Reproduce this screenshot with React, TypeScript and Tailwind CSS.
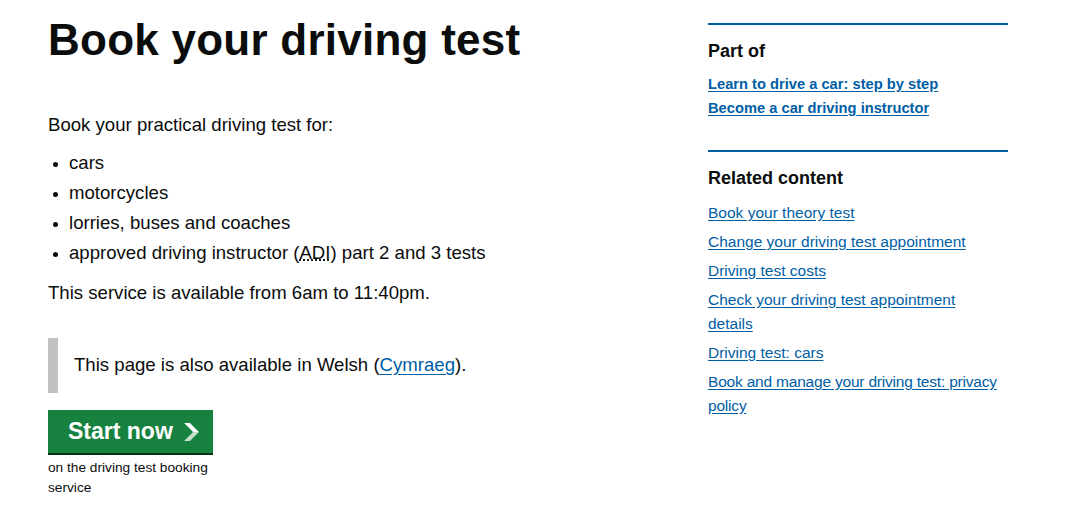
import React from "react";

const items = ["cars", "motorcycles", "lorries, buses and coaches"];

const related = [
  "Book your theory test",
  "Change your driving test appointment",
  "Driving test costs",
  "Check your driving test appointment details",
  "Driving test: cars",
];

function Bullet({ children }: { children: React.ReactNode }) {
  return (
    <li className="flex items-center">
      <span className="mt-[3px] ml-[5px] mr-[11px] h-[5px] w-[5px] shrink-0 rounded-full bg-[#0b0c0c]" />
      <span>{children}</span>
    </li>
  );
}

export default function App() {
  return (
    <div className="min-h-[516px] bg-white font-['Liberation_Sans',Arial,sans-serif] text-[#0b0c0c]">
      <div className="flex gap-[30px] pl-[48px]">
        {/* main column */}
        <div className="w-[630px] pt-[18px]">
          <h1 className="text-[44px] leading-[44px] font-bold tracking-[0.25px]">
            Book your driving test
          </h1>

          <p className="mt-[48px] text-[18.6px] leading-[30px]">
            Book your practical driving test for:
          </p>
          <ul className="mt-[8px] text-[18.6px] leading-[30px]">
            {items.map((i) => (
              <Bullet key={i}>{i}</Bullet>
            ))}
            <Bullet>
              approved driving instructor (
              <abbr title="approved driving instructor">ADI</abbr>) part 2 and
              3 tests
            </Bullet>
          </ul>
          <p className="mt-[10px] text-[18.6px] leading-[30px]">
            This service is available from 6am to 11:40pm.
          </p>

          <div className="mt-[30px] border-l-[10px] border-[#bfc1c3] pt-[12px] pb-[13px] pl-[16px] text-[18.6px] leading-[30px]">
            This page is also available in Welsh (
            <a href="#" className="text-[#005ea5] underline underline-offset-[3px]">
              Cymraeg
            </a>
            ).
          </div>

          <div className="mt-[17px] w-[165px]">
            <a
              href="#"
              className="flex h-[43px] items-center bg-[#17813f] pl-[20px] text-[23px] font-bold text-white shadow-[0_2px_0_#063519]"
            >
              Start now
              <svg width="15" height="18" viewBox="0 0 33 40" className="ml-[11px] mt-[1px]">
                <defs>
                  <linearGradient id="arr" x1="0" y1="0" x2="0" y2="1">
                    <stop offset="0.5" stopColor="#fff" />
                    <stop offset="0.5" stopColor="#fff" stopOpacity="0.75" />
                  </linearGradient>
                </defs>
                <path d="M0 0h13l20 20-20 20H0l20-20z" fill="url(#arr)" />
              </svg>
            </a>
            <p className="mt-[5px] text-[13.7px] leading-[20px]">
              on the driving test booking service
            </p>
          </div>
        </div>

        {/* sidebar */}
        <aside className="w-[300px] pt-[23px]">
          <div className="border-t-2 border-[#005ea5] pt-[14px]">
            <h2 className="text-[18px] leading-[24px] font-bold">Part of</h2>
            <ul className="mt-[9px] text-[14.7px] leading-[24px] font-bold">
              <li>
                <a href="#" className="text-[#005ea5] underline underline-offset-[2px]">
                  Learn to drive a car: step by step
                </a>
              </li>
              <li>
                <a href="#" className="text-[#005ea5] underline underline-offset-[2px]">
                  Become a car driving instructor
                </a>
              </li>
            </ul>
          </div>

          <div className="mt-[30px] border-t-2 border-[#005ea5] pt-[14px]">
            <h2 className="text-[18px] leading-[24px] font-bold">Related content</h2>
            <ul className="mt-[11px] w-[292px] text-[15.5px] leading-[24px]">
              {related.map((r) => (
                <li key={r} className="mb-[5px]">
                  <a href="#" className="text-[#005ea5] underline underline-offset-[2px]">
                    {r}
                  </a>
                </li>
              ))}
              <li className="mb-[5px] tracking-[-0.2px]">
                <a href="#" className="text-[#005ea5] underline underline-offset-[2px]">
                  Book and manage your driving test: privacy policy
                </a>
              </li>
            </ul>
          </div>
        </aside>
      </div>
    </div>
  );
}
